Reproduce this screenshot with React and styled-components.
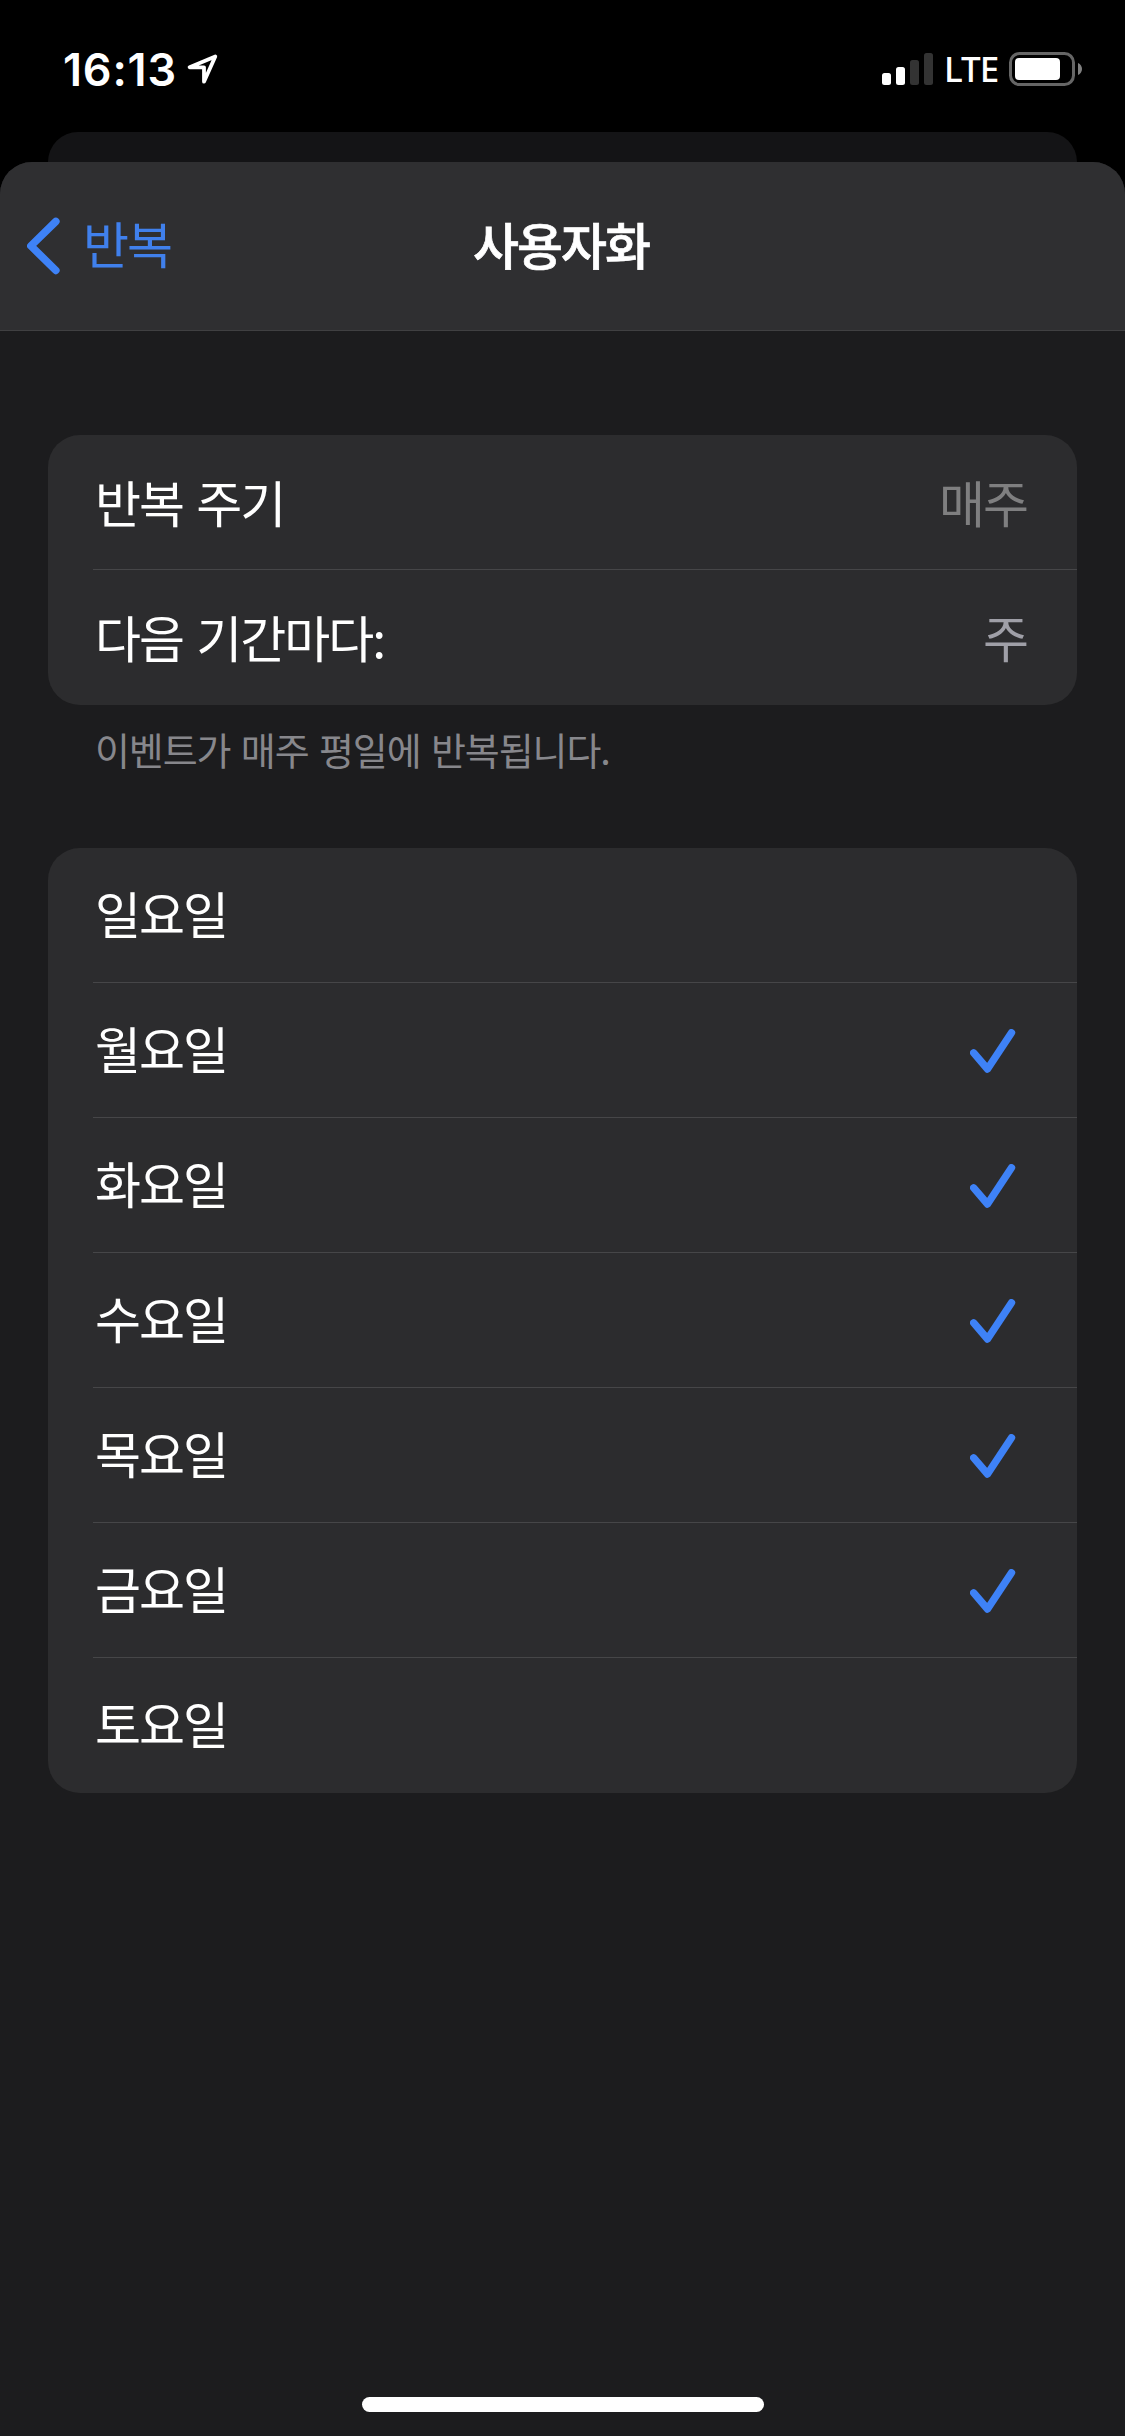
import React from 'react';
import styled, { createGlobalStyle } from 'styled-components';

const DAYS = [
  { id: 'sun', label: '일요일', checked: false },
  { id: 'mon', label: '월요일', checked: true },
  { id: 'tue', label: '화요일', checked: true },
  { id: 'wed', label: '수요일', checked: true },
  { id: 'thu', label: '목요일', checked: true },
  { id: 'fri', label: '금요일', checked: true },
  { id: 'sat', label: '토요일', checked: false }
];

const StatusIcons = () => (
  <StatusRight>
    <svg width="51" height="32" viewBox="0 0 51 32">
      <rect x="0" y="20" width="9" height="12" rx="2.5" fill="#fff" />
      <rect x="14" y="14" width="9" height="18" rx="2.5" fill="#fff" />
      <rect x="28" y="7" width="9" height="25" rx="2.5" fill="#333" />
      <rect x="42" y="0" width="9" height="32" rx="2.5" fill="#333" />
    </svg>
    <Carrier>LTE</Carrier>
    <svg width="73" height="34" viewBox="0 0 73 34">
      <rect
        x="1.5"
        y="1.5"
        width="63"
        height="31"
        rx="9"
        fill="none"
        stroke="#666"
        strokeWidth="3"
      />
      <rect x="6" y="6" width="45" height="22" rx="4" fill="#fff" />
      <path d="M69 11c2.6 1.2 4 3.400 4 6s-1.400 4.800-4 6z" fill="#808080" />
    </svg>
  </StatusRight>
);

const LocationArrow = () => (
  <svg width="32" height="32" viewBox="0 0 32 32">
    <path
      d="M28.300 3.500 2.600 14.300H17V28.700z"
      fill="none"
      stroke="#fff"
      strokeWidth="3.800"
      strokeLinejoin="round"
    />
  </svg>
);

const Chevron = () => (
  <svg width="34" height="58" viewBox="0 0 34 58">
    <path
      d="M28.800 4.500 3.900 28.900l24.900 24.500"
      fill="none"
      stroke="#3e82f7"
      strokeWidth="7.600"
      strokeLinecap="round"
      strokeLinejoin="round"
    />
  </svg>
);

const Check = () => (
  <CheckIcon viewBox="0 0 46 45">
    <path
      d="M3.700 23.800 17.500 40 41.500 3.800"
      fill="none"
      stroke="#3e82f7"
      strokeWidth="7.400"
      strokeLinecap="round"
      strokeLinejoin="round"
    />
  </CheckIcon>
);

const App = () => (
  <Screen>
    <GlobalStyle />
    <StatusBar>
      <Time>16:13</Time>
      <LocationArrow />
      <StatusIcons />
    </StatusBar>
    <BackSheet />
    <Sheet>
      <Header>
        <Back>
          <Chevron />
          <BackLabel>반복</BackLabel>
        </Back>
        <Title>사용자화</Title>
      </Header>
      <Content>
        <Card>
          <Row>
            <Label $gap={3}>반복 주기</Label>
            <Value $gap={3} $color="#7f7f80">매주</Value>
          </Row>
          <Row>
            <Label $gap={3}>다음 기간마다:</Label>
            <Value $gap={3} $color="#9f9fa7">주</Value>
          </Row>
        </Card>
        <Note>이벤트가 매주 평일에 반복됩니다.</Note>
        <Card>
          {DAYS.map(day => (
            <Row key={day.id}>
              <Label>{day.label}</Label>
              {day.checked && <Check />}
            </Row>
          ))}
        </Card>
      </Content>
      <HomeIndicator />
    </Sheet>
  </Screen>
);

const GlobalStyle = createGlobalStyle`
  * {
    box-sizing: border-box;
  }
  body {
    background: #000;
    margin: 0;
  }
  svg {
    display: block;
    flex: none;
  }
`;
const Screen = styled.div`
  background: #000;
  color: #fff;
  display: flex;
  flex-direction: column;
  font-family: 'Noto Sans CJK KR', sans-serif;
  font-size: 50px;
  height: 2436px;
  overflow: hidden;
  width: 1125px;
`;
const StatusBar = styled.div`
  align-items: center;
  display: flex;
  flex: none;
  height: 132px;
  padding: 6px 43px 0 63px;
`;
const Time = styled.div`
  font-family: Inter, sans-serif;
  font-size: 45px;
  font-weight: 600;
  letter-spacing: 0.8px;
  margin-right: 11px;
  width: 113px;
  white-space: nowrap;
`;
const StatusRight = styled.div`
  align-items: center;
  display: flex;
  margin-left: auto;
`;
const Carrier = styled.div`
  font-family: 'Noto Sans', sans-serif;
  font-size: 35px;
  font-weight: 500;
  letter-spacing: -1px;
  line-height: 40px;
  margin-left: 11px;
  width: 65px;
`;
const BackSheet = styled.div`
  background: #141416;
  border-radius: 30px 30px 0 0;
  flex: none;
  height: 60px;
  margin: 0 48px -30px;
`;
const Sheet = styled.div`
  background: #1c1c1e;
  border-radius: 32px 32px 0 0;
  display: flex;
  flex: 1;
  flex-direction: column;
  overflow: hidden;
  z-index: 1;
`;
const Header = styled.div`
  align-items: center;
  background: #2f2f31;
  border-bottom: solid 1px #404042;
  display: grid;
  flex: none;
  grid-template-columns: 1fr auto 1fr;
  height: 169px;
  padding: 0 27px;
`;
const Back = styled.div`
  align-items: center;
  color: #4080ec;
  display: flex;
  gap: 22px;
`;
const Label = styled.div`
  letter-spacing: -2px;
  line-height: 60px;
  padding-bottom: ${props => props.$gap || 7}px;
  word-spacing: 4px;
`;
const BackLabel = styled(Label)`
  padding-bottom: 8px;
`;
const Title = styled(Label)`
  -webkit-text-stroke: 0.7px #fff;
  font-weight: 500;
  padding-right: 3px;
`;
const Value = styled(Label)`
  color: ${props => props.$color};
  padding-right: 2px;
`;
const Content = styled.div`
  flex: 1;
  padding: 104px 48px 0;
`;
const Card = styled.div`
  background: #2c2c2e;
  border-radius: 32px;
  overflow: hidden;
`;
const Row = styled.div`
  align-items: center;
  background: linear-gradient(#464648, #464648) 45px 100% / 100% 1px no-repeat;
  display: flex;
  height: 135px;
  justify-content: space-between;
  padding: 0 48px 0 47px;

  &:last-child {
    background: none;
  }
`;
const CheckIcon = styled.svg`
  height: 45px;
  margin: 2px 13px 0 0;
  width: 46px;
`;
const Note = styled.div`
  color: #87878c;
  font-size: 38px;
  height: 143px;
  letter-spacing: -1.1px;
  line-height: 48px;
  padding: 20px 48px 0 47px;
  word-spacing: 3px;
`;
const HomeIndicator = styled.div`
  align-self: center;
  background: #fff;
  border-radius: 8px;
  flex: none;
  height: 15px;
  margin-bottom: 24px;
  width: 402px;
`;

export default App;
